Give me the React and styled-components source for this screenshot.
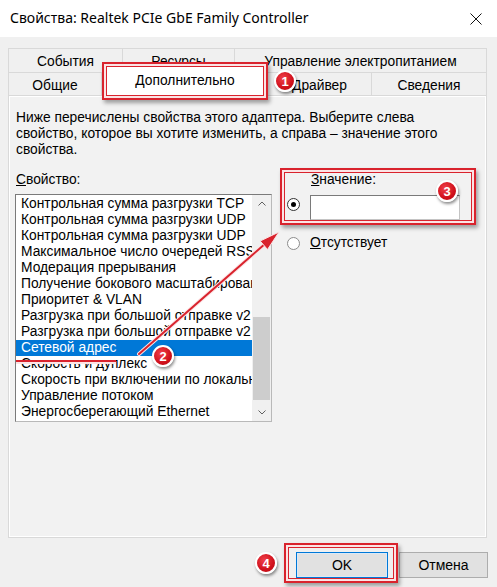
import React from 'react'
import styled, { createGlobalStyle } from 'styled-components'

const GlobalStyle = createGlobalStyle`
    html, body {
        margin: 0;
        padding: 0;
        background: #f0f0f0;
    }
    body {
        font-family: "Liberation Sans", Arial, sans-serif;
        font-size: 13.8px;
        color: #000000;
    }
`

const Dialog = styled.div`
    position: relative;
    width: 497px;
    height: 587px;
    overflow: hidden;
    background: #f0f0f0;
    display: flex;
    flex-direction: column;
`

const TitleBar = styled.div`
    height: 37px;
    background: #ffffff;
    display: flex;
    align-items: center;
    justify-content: space-between;
    padding: 0 15px 0 10px;
`

const Title = styled.div`
    font-family: "Noto Sans", "Open Sans", sans-serif;
    font-size: 14px;
    margin-top: -2px;
`

const CloseIcon = styled.svg`
    width: 12px;
    height: 12px;
    margin-top: 1px;
`

const Body = styled.div`
    padding-top: 11px;
    display: flex;
    flex-direction: column;
`

const TabStrip = styled.div`
    margin: 0 10px 0 8px;
    display: flex;
    flex-direction: column;
`

const TabRow = styled.div`
    display: flex;
    height: ${p => p.$h}px;
`

const Tab = styled.div`
    position: relative;
    box-sizing: border-box;
    width: ${p => p.$w}px;
    display: flex;
    align-items: center;
    justify-content: center;
    border: 1px solid #d9d9d9;
    border-bottom: none;
    margin-left: -1px;
    background: #f0f0f0;
    white-space: nowrap;
    padding-top: ${p => p.$pt || 0}px;

    &:first-child {
        margin-left: 0;
    }
`

const ActiveTab = styled.div`
    position: relative;
    z-index: 2;
    box-sizing: border-box;
    width: ${p => p.$w}px;
    height: 38px;
    margin-top: -10px;
    display: flex;
    align-items: center;
    justify-content: center;
    background: #ffffff;
    padding-bottom: 1px;
`

const Frame = styled.span`
    position: absolute;
    top: ${p => p.$t}px;
    right: ${p => p.$r}px;
    bottom: ${p => p.$b}px;
    left: ${p => p.$l}px;
    border: 2px solid #d9232d;
    box-shadow:
        inset 0 0 0 2px #fbe4e5,
        inset 0 0 0 3px #d9232d,
        2px 3px 4px rgba(0, 0, 0, 0.35);
    pointer-events: none;
`

const Panel = styled.div`
    margin: 0 10px 0 8px;
    height: 443px;
    box-sizing: border-box;
    border: 1px solid #d9d9d9;
    box-shadow: inset 0 0 0 1px #ffffff;
    background: #f2f2f2;
    padding: 14px 6px 0 6px;
    display: flex;
    flex-direction: column;
`

const Description = styled.p`
    margin: 0;
    padding-left: 1px;
    line-height: 16px;
    white-space: nowrap;
`

const Columns = styled.div`
    margin-top: 14px;
    display: flex;
    gap: 15px;
`

const PropertyColumn = styled.div`
    width: 257px;
    display: flex;
    flex-direction: column;
    gap: 6px;
`

const FieldLabel = styled.div`
    line-height: 16px;
    padding-left: 1px;
    white-space: nowrap;
`

const ListBox = styled.div`
    display: flex;
    border: 1px solid;
    border-color: #7a7a7a #b9b9b9 #b9b9b9 #7a7a7a;
    background: #ffffff;
`

const Items = styled.div`
    flex: 1;
    min-width: 0;
    padding: 1px 0;
`

const Item = styled.div`
    height: 16px;
    line-height: 16px;
    padding-left: 5px;
    white-space: nowrap;
    overflow: hidden;
    background: ${p => (p.$selected ? '#0078d7' : 'transparent')};
    color: ${p => (p.$selected ? '#ffffff' : '#000000')};
`

const ScrollBar = styled.div`
    width: 19px;
    background: #f0f0f0;
    display: flex;
    flex-direction: column;
`

const ScrollButton = styled.div`
    height: 17px;
    display: flex;
    align-items: center;
    justify-content: center;
`

const Track = styled.div`
    flex: 1;
    display: flex;
    flex-direction: column;
    padding-top: 105px;
`

const Thumb = styled.div`
    height: 83px;
    margin: 0 1px;
    background: #cdcdcd;
`

const ValueColumn = styled.div`
    display: flex;
    flex-direction: column;
    gap: 15px;
`

const ValueGroup = styled.div`
    position: relative;
    display: grid;
    grid-template-columns: 13px 150px;
    column-gap: 10px;
    row-gap: 7px;
`

const RadioRow = styled.div`
    display: grid;
    grid-template-columns: 13px auto;
    column-gap: 10px;
    align-items: center;
    line-height: 16px;
`

const Radio = styled.span`
    box-sizing: border-box;
    width: 13px;
    height: 13px;
    border-radius: 50%;
    border: 1px solid ${p => (p.$checked ? '#333333' : '#8c8c8c')};
    background: #ffffff;
    display: flex;
    align-items: center;
    justify-content: center;
    align-self: ${p => p.$align || 'center'};
    margin-top: ${p => p.$mt || 0}px;

    &::after {
        content: '';
        display: ${p => (p.$checked ? 'block' : 'none')};
        width: 5px;
        height: 5px;
        border-radius: 50%;
        background: #000000;
    }
`

const TextBox = styled.div`
    box-sizing: border-box;
    height: 25px;
    background: #ffffff;
    border: 1px solid;
    border-color: #7a7a7a #c4c4c4 #c4c4c4 #7a7a7a;
`

const ButtonRow = styled.div`
    margin-top: 14px;
    padding-right: 9px;
    display: flex;
    justify-content: flex-end;
    gap: 11px;
`

const Callout = styled.div`
    position: relative;
    display: flex;
`

const Button = styled.button`
    box-sizing: border-box;
    width: ${p => p.$w}px;
    height: 26px;
    padding: 0;
    font-family: "Liberation Sans", Arial, sans-serif;
    font-size: 14px;
    color: #000000;
    background: #e1e1e1;
    border: 1px solid ${p => (p.$default ? '#0078d7' : '#adadad')};
    box-shadow: ${p => (p.$default ? 'inset 0 0 0 1px #dbe9f7' : 'none')};
`

const Badge = styled.div`
    position: absolute;
    left: ${p => p.$x - 11}px;
    top: ${p => p.$y - 11}px;
    z-index: 6;
    box-sizing: border-box;
    width: 22px;
    height: 22px;
    border-radius: 50%;
    border: 2px solid #ffffff;
    background: radial-gradient(circle at 40% 35%, #f0414a 0%, #d0101b 60%, #b00812 100%);
    box-shadow: 1px 2px 3px rgba(0, 0, 0, 0.45);
    color: #ffffff;
    font-family: "Liberation Sans", Arial, sans-serif;
    font-weight: bold;
    font-size: 13px;
    display: flex;
    align-items: center;
    justify-content: center;
`

const Annotations = styled.svg`
    position: absolute;
    left: 0;
    top: 0;
    width: 497px;
    height: 587px;
    z-index: 5;
    pointer-events: none;
`

const properties = [
    'Контрольная сумма разгрузки TCP',
    'Контрольная сумма разгрузки UDP',
    'Контрольная сумма разгрузки UDP',
    'Максимальное число очередей RSS',
    'Модерация прерывания',
    'Получение бокового масштабирования',
    'Приоритет & VLAN',
    'Разгрузка при большой отправке v2 (IPv4)',
    'Разгрузка при большой отправке v2 (IPv6)',
    'Сетевой адрес',
    'Скорость и дуплекс',
    'Скорость при включении по локальной сети',
    'Управление потоком',
    'Энергосберегающий Ethernet',
]

const Chevron = ({ up }) => (
    <svg width="8" height="5" viewBox="0 0 8 5">
        <path
            d={up ? 'M0.5 4.5 L4 1 L7.5 4.5' : 'M0.5 0.5 L4 4 L7.5 0.5'}
            fill="none"
            stroke="#606060"
            strokeWidth="1"
        />
    </svg>
)

export default function App() {
    return (
        <>
            <GlobalStyle />
            <Dialog>
                <TitleBar>
                    <Title>{'Свойства: Realtek PCIe GbE Family Controller'}</Title>
                    <CloseIcon viewBox="0 0 12 12">
                        <path d="M0.5 0.5 L11.5 11.5 M11.5 0.5 L0.5 11.5" stroke="#111111" strokeWidth="1" />
                    </CloseIcon>
                </TitleBar>

                <Body>
                    <TabStrip>
                        <TabRow $h={24}>
                            <Tab $w={115} $pt={1}>{'События'}</Tab>
                            <Tab $w={113} $pt={1}>{'Ресурсы'}</Tab>
                            <Tab $w={253} $pt={1}>{'Управление электропитанием'}</Tab>
                        </TabRow>
                        <TabRow $h={23}>
                            <Tab $w={94} $pt={2}>{'Общие'}</Tab>
                            <ActiveTab $w={166}>
                                {'Дополнительно'}
                                <Frame $t={0} $r={0} $b={0} $l={0} />
                            </ActiveTab>
                            <Tab $w={105} $pt={2}>{'Драйвер'}</Tab>
                            <Tab $w={116} $pt={2}>{'Сведения'}</Tab>
                        </TabRow>
                    </TabStrip>

                    <Panel>
                        <Description>
                            {'Ниже перечислены свойства этого адаптера. Выберите слева'}
                            <br />
                            {'свойство, которое вы хотите изменить, а справа – значение этого'}
                            <br />
                            {'свойства.'}
                        </Description>

                        <Columns>
                            <PropertyColumn>
                                <FieldLabel><u>{'С'}</u>{'войство:'}</FieldLabel>
                                <ListBox>
                                    <Items>
                                        {properties.map((name, i) => (
                                            <Item key={i} $selected={i === 9}>{name}</Item>
                                        ))}
                                    </Items>
                                    <ScrollBar>
                                        <ScrollButton><Chevron up /></ScrollButton>
                                        <Track><Thumb /></Track>
                                        <ScrollButton><Chevron /></ScrollButton>
                                    </ScrollBar>
                                </ListBox>
                            </PropertyColumn>

                            <ValueColumn>
                                <ValueGroup>
                                    <span />
                                    <FieldLabel><u>{'З'}</u>{'начение:'}</FieldLabel>
                                    <Radio $checked $align="start" $mt={3} />
                                    <TextBox />
                                    <Frame $t={-4} $r={-16} $b={-5} $l={-7} />
                                </ValueGroup>
                                <RadioRow>
                                    <Radio />
                                    <span><u>{'О'}</u>{'тсутствует'}</span>
                                </RadioRow>
                            </ValueColumn>
                        </Columns>
                    </Panel>

                    <ButtonRow>
                        <Callout>
                            <Button $w={92} $default>{'OK'}</Button>
                            <Frame $t={-9} $r={-10} $b={-5} $l={-12} />
                        </Callout>
                        <Button $w={89}>{'Отмена'}</Button>
                    </ButtonRow>
                </Body>

                <Annotations viewBox="0 0 497 587">
                    <line x1="16" y1="363" x2="116" y2="363" stroke="#fbe4e5" strokeWidth="2" />
                    <line x1="16" y1="361" x2="116" y2="361" stroke="#d9232d" strokeWidth="2" />
                    <line x1="139" y1="354" x2="266" y2="243" stroke="#fbe4e5" strokeWidth="4" strokeLinecap="round" />
                    <line x1="139" y1="354" x2="266" y2="243" stroke="#d9232d" strokeWidth="2" strokeLinecap="round" />
                    <polygon points="279,232 267.5,249.5 260.2,241" fill="#d9232d" stroke="#fbe4e5" strokeWidth="1" />
                </Annotations>

                <Badge $x={285} $y={81}>{'1'}</Badge>
                <Badge $x={163} $y={356}>{'2'}</Badge>
                <Badge $x={447} $y={191}>{'3'}</Badge>
                <Badge $x={266} $y={563}>{'4'}</Badge>
            </Dialog>
        </>
    )
}
